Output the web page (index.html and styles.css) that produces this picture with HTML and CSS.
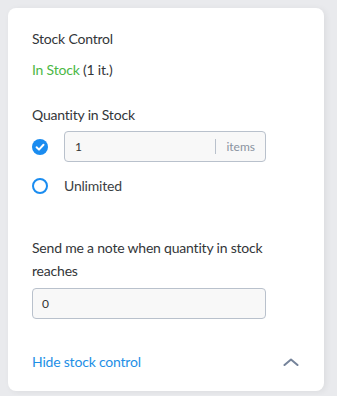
FILE: index.html
```html
<!DOCTYPE html>
<html lang="en">
<head>
<meta charset="utf-8">
<title>Stock Control</title>
<link rel="stylesheet" href="styles.css">
</head>
<body>
<div class="card">
  <div class="title">Stock Control</div>
  <div class="status"><span class="in-stock">In Stock</span> (1 it.)</div>

  <div class="label qty-label">Quantity in Stock</div>
  <div class="option-row first">
    <span class="radio checked">
      <svg viewBox="0 0 16 16" width="16" height="16"><circle cx="8" cy="8" r="8" fill="#1a8cf0"/><path d="M4.6 8.3 L7 10.6 L11.5 5.8" fill="none" stroke="#fff" stroke-width="2" stroke-linecap="round" stroke-linejoin="round"/></svg>
    </span>
    <div class="input qty-input">
      <span class="value">1</span>
      <span class="sep"></span>
      <span class="unit">items</span>
    </div>
  </div>
  <div class="option-row">
    <span class="radio">
      <svg viewBox="0 0 16 16" width="16" height="16"><circle cx="8" cy="8" r="7" fill="#fff" stroke="#1a8cf0" stroke-width="2"/></svg>
    </span>
    <span class="option-text">Unlimited</span>
  </div>

  <div class="label note-label">Send me a note when quantity in stock reaches</div>
  <div class="input note-input"><span class="value">0</span></div>

  <div class="footer">
    <a class="toggle" href="#">Hide stock control</a>
    <svg class="chev" viewBox="0 0 16 8" width="16" height="8"><path d="M1.5 7 L8 1.5 L14.5 7" fill="none" stroke="#75839a" stroke-width="2" stroke-linecap="round" stroke-linejoin="round"/></svg>
  </div>
</div>
</body>
</html>
```

FILE: styles.css
```css
html, body {
  margin: 0;
  padding: 0;
}
body {
  background: #e9eaed;
  padding: 8px 13px 4px 8px;
  font-family: "Lato", "Noto Sans", sans-serif;
  font-size: 14px;
  letter-spacing: -0.2px;
  color: #333639;
}
.card {
  background: #fff;
  border-radius: 8px;
  padding: 21px 24px 19px 24px;
  box-shadow: 2px 1px 6px rgba(0,0,0,0.06);
  display: flex;
  flex-direction: column;
}
.title, .status, .label, .option-text, .footer {
  line-height: 20px;
}
.status {
  margin-top: 11px;
}
.in-stock {
  color: #4cb846;
}
.qty-label {
  margin-top: 25px;
}
.option-row {
  display: flex;
  align-items: center;
  gap: 16px;
  margin-top: 14px;
}
.option-row.first {
  margin-top: 6px;
}
.option-text {
  color: #3c3f44;
}
.radio {
  width: 16px;
  height: 16px;
  display: flex;
}
.input {
  box-sizing: border-box;
  height: 31px;
  border: 1px solid #b9c1cc;
  border-radius: 4px;
  background: #f8f8f8;
  display: flex;
  align-items: center;
  font-size: 12px;
  letter-spacing: 0;
  color: #333;
}
.qty-input {
  width: 202px;
  padding: 0 10px 0 10px;
}
.qty-input .value {
  flex: 1;
}
.sep {
  width: 1px;
  height: 15px;
  background: #b9c1cc;
  margin-right: 10px;
}
.unit {
  color: #8a93a0;
}
.note-label {
  margin-top: 40px;
  line-height: 23px;
  width: 240px;
}
.note-input {
  width: 234px;
  margin-top: 6px;
  padding: 0 9px;
}
.footer {
  margin-top: 33px;
  display: flex;
  align-items: center;
  justify-content: space-between;
}
.toggle {
  color: #1e8fe6;
  text-decoration: none;
}
.chev {
  margin-right: 1px;
}
```
